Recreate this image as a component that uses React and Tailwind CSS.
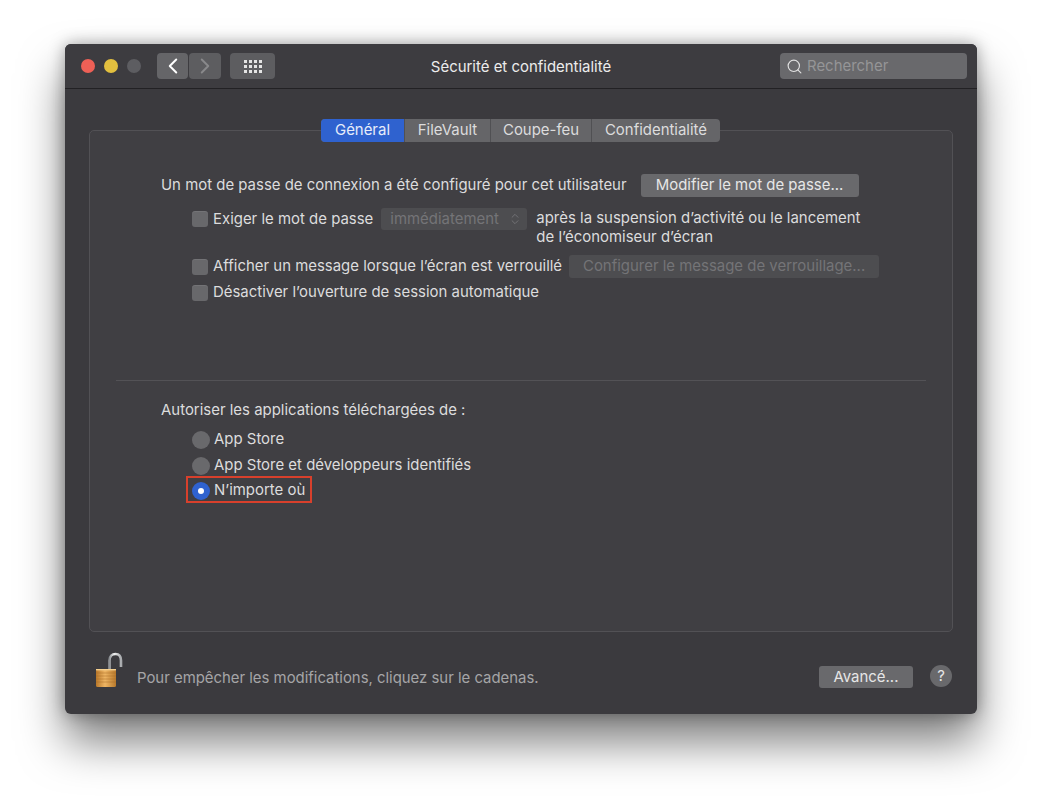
import { Search, ChevronLeft, ChevronRight, ChevronsUpDown } from 'lucide-react';

const tabs = [
  { label: 'Général', width: 'w-[83px]', active: true },
  { label: 'FileVault', width: 'w-[86px]' },
  { label: 'Coupe-feu', width: 'w-[101px]' },
  { label: 'Confidentialité', width: 'w-[129px]' },
];

const Checkbox = () => (
  <span className="w-[16px] h-[16px] shrink-0 rounded-[3px] bg-[#68686b] shadow-[inset_0_1px_0_rgba(255,255,255,0.08)]" />
);

const Radio = ({ checked }) => (
  <span
    className={`w-[18px] h-[18px] shrink-0 rounded-full flex items-center justify-center ${
      checked ? 'bg-[#2f62cf]' : 'bg-[#69696c]'
    }`}
  >
    {checked && <span className="w-[6px] h-[6px] rounded-full bg-white" />}
  </span>
);

const Lock = () => (
  <svg width="30" height="38" viewBox="0 0 30 38" className="shrink-0">
    <defs>
      <linearGradient id="shackle" x1="0" y1="0" x2="1" y2="0">
        <stop offset="0" stopColor="#8f9296" />
        <stop offset="0.4" stopColor="#f2f2f2" />
        <stop offset="1" stopColor="#a9abae" />
      </linearGradient>
      <linearGradient id="brass" x1="0" y1="0" x2="1" y2="0">
        <stop offset="0" stopColor="#b9782a" />
        <stop offset="0.45" stopColor="#eeb564" />
        <stop offset="1" stopColor="#b97a2c" />
      </linearGradient>
    </defs>
    <path d="M14.5 17V8.5C14.5 4.5 17 2 20.5 2S26 4.5 26 8.5V15" fill="none" stroke="url(#shackle)" strokeWidth="2.6" />
    <rect x="1" y="17" width="20" height="18" rx="1.5" fill="url(#brass)" />
    <path d="M1 21H21M1 24H21M1 27H21M1 30H21" stroke="#a96f28" strokeWidth="0.7" opacity="0.7" />
    <rect x="1" y="17" width="20" height="1.4" fill="#f6d08f" />
  </svg>
);

const App = () => {
  return (
    <div className="w-[1042px] h-[800px] overflow-hidden bg-white pl-[65px] pt-[44px] font-['Inter','Liberation_Sans',sans-serif] text-[14.95px] text-[#dcdcdd]">
      <div className="w-[912px] h-[670px] flex flex-col rounded-[6px] bg-[#3b3a3e] shadow-[0_28px_45px_rgba(0,0,0,0.5),0_0_16px_rgba(0,0,0,0.35)]">
        {/* Title bar */}
        <div className="h-[45px] shrink-0 flex items-center pl-[16px] pr-[10px] border-b border-[#222124] rounded-t-[6px] bg-[#3d3c40]">
          <span className="w-[14px] h-[14px] rounded-full bg-[#ee6056]" />
          <span className="w-[14px] h-[14px] rounded-full bg-[#e3c03f] ml-[9px]" />
          <span className="w-[14px] h-[14px] rounded-full bg-[#5d5d61] ml-[9px]" />
          <button className="w-[31px] h-[26px] ml-[16px] rounded-[4px] bg-[#656568] flex items-center justify-center text-white">
            <ChevronLeft size={26} strokeWidth={1.8} />
          </button>
          <button className="w-[32px] h-[26px] ml-[1px] rounded-[4px] bg-[#5d5d60] flex items-center justify-center text-[#89898b]">
            <ChevronRight size={26} strokeWidth={1.8} />
          </button>
          <button className="w-[45px] h-[26px] ml-[9px] rounded-[4px] bg-[#5d5d60] flex items-center justify-center">
            <span className="grid grid-cols-4 gap-[2px]">
              {Array.from({ length: 12 }).map((_, i) => (
                <span key={i} className="w-[3px] h-[3px] bg-[#e4e4e4]" />
              ))}
            </span>
          </button>
          <div className="flex-1 text-center text-[#ececec] pr-[13px] pt-[2px]">Sécurité et confidentialité</div>
          <div className="w-[187px] h-[26px] rounded-[4px] bg-[#69696c] flex items-center pl-[6px] text-[#959597]">
            <Search size={17} strokeWidth={1.6} className="text-[#e2e2e2]" />
            <span className="ml-[4px] pt-[1px]">Rechercher</span>
          </div>
        </div>

        {/* Content */}
        <div className="flex-1 flex flex-col pl-[24px] pr-[24px] pt-[41px]">
          <div className="h-[502px] shrink-0 rounded-[5px] border border-[#525155] bg-[#403f43] flex flex-col">
            <div className="flex justify-center -mt-[12px] h-[23px] shrink-0">
              <div className="flex rounded-[4px] overflow-hidden bg-[#656568] ml-[-1px]">
                {tabs.map((tab) => (
                  <div
                    key={tab.label}
                    className={`${tab.width} flex items-center justify-center ${
                      tab.active ? 'bg-[#2f62cf] text-[#e6ecfa]' : 'border-l border-[#505053] first:border-l-0'
                    }`}
                  >
                    {tab.label}
                  </div>
                ))}
              </div>
            </div>

            <div className="pl-[71px] pt-[32px]">
              <div className="flex items-center h-[23px]">
                <span>Un mot de passe de connexion a été configuré pour cet utilisateur</span>
                <button className="w-[218px] h-[23px] ml-[14px] rounded-[3px] bg-[#69696c] text-[#e6e6e6]">Modifier le mot de passe...</button>
              </div>

              <div className="pl-[31px]">
                <div className="flex items-start mt-[11px]">
                  <div className="flex items-center h-[22px]">
                    <Checkbox />
                    <span className="ml-[5px]">Exiger le mot de passe</span>
                    <div className="w-[146px] h-[22px] ml-[8px] rounded-[3px] bg-[#4d4d50] flex items-center justify-between pl-[9px] pr-[5px] text-[#747477]">
                      <span>immédiatement</span>
                      <ChevronsUpDown size={14} strokeWidth={1.6} />
                    </div>
                  </div>
                  <p className="ml-[9px] leading-[19px] mt-[1px]">
                    après la suspension d’activité ou le lancement
                    <br />
                    de l’économiseur d’écran
                  </p>
                </div>

                <div className="flex items-center h-[23px] mt-[8px]">
                  <Checkbox />
                  <span className="ml-[5px]">Afficher un message lorsque l’écran est verrouillé</span>
                  <button className="w-[310px] h-[23px] ml-[7px] rounded-[3px] bg-[#4d4d50] text-[#747477]">Configurer le message de verrouillage...</button>
                </div>

                <div className="flex items-center h-[20px] mt-[4.5px]">
                  <Checkbox />
                  <span className="ml-[5px]">Désactiver l’ouverture de session automatique</span>
                </div>
              </div>
            </div>

            <div className="h-px bg-[#535256] ml-[26px] mr-[26px] mt-[77px]" />

            <div className="pl-[71px] pt-[20px]">
              <div className="h-[20px] flex items-center">Autoriser les applications téléchargées de :</div>
              <div className="pl-[31px] pt-[9px]">
                <div className="flex items-center h-[20px]">
                  <Radio />
                  <span className="ml-[4px]">App Store</span>
                </div>
                <div className="flex items-center h-[20px] mt-[6px]">
                  <Radio />
                  <span className="ml-[4px]">App Store et développeurs identifiés</span>
                </div>
                <div className="flex items-center h-[27px] w-[126px] -ml-[6px] pl-[4px] pt-[3px] border-[2.5px] border-[#d8402c]">
                  <Radio checked />
                  <span className="ml-[4px] whitespace-nowrap">N’importe où</span>
                </div>
              </div>
            </div>
          </div>

          {/* Footer */}
          <div className="flex items-center mt-[20px] ml-[6px] mr-[1px]">
            <Lock />
            <span className="ml-[12px] mt-[14px] text-[14.9px] text-[#a5a5a7]">Pour empêcher les modifications, cliquez sur le cadenas.</span>
            <button className="w-[94px] h-[22px] ml-auto mt-[12px] rounded-[3px] bg-[#69696c] text-[#e6e6e6]">Avancé...</button>
            <span className="w-[22px] h-[22px] ml-[17px] mt-[10px] rounded-full bg-[#69696c] flex items-center justify-center text-[#e6e6e6]">?</span>
          </div>
        </div>
      </div>
    </div>
  );
};

export default App;
